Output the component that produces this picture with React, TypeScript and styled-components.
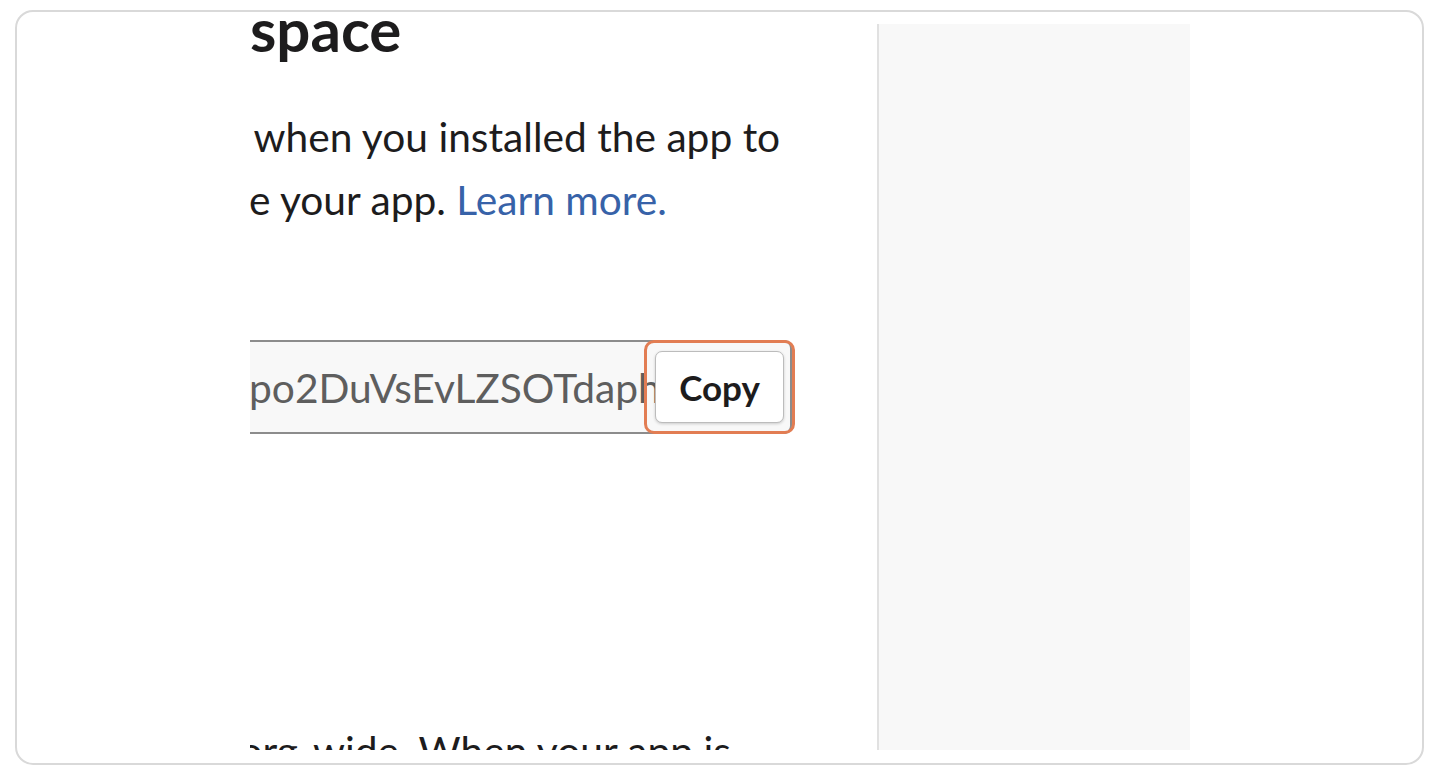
import React from 'react';
import styled, { createGlobalStyle } from 'styled-components';

const GlobalStyle = createGlobalStyle`
  html, body {
    margin: 0;
    padding: 0;
    background: #ffffff;
  }
  body {
    font-family: Lato, "Noto Sans", "DejaVu Sans", sans-serif;
    color: #1d1c1d;
  }
`;

const Frame = styled.div`
  width: 1438px;
  height: 774px;
  box-sizing: border-box;
  padding: 10px 14px 9px 15px;
  background: #ffffff;
`;

const Card = styled.div`
  height: 100%;
  box-sizing: border-box;
  border: 2px solid #d9d9d9;
  border-radius: 18px;
  overflow: hidden;
  padding-bottom: 13px;
  display: flex;
  flex-direction: column;
`;

const Viewport = styled.div`
  flex: 1;
  min-height: 0;
  display: flex;
  overflow: hidden;
`;

const Gutter = styled.div`
  width: 233px;
  flex: 0 0 233px;
`;

const Main = styled.div`
  width: 627px;
  flex: 0 0 627px;
  overflow: hidden;
`;

const SidePanel = styled.aside`
  width: 313px;
  flex: 0 0 313px;
  box-sizing: border-box;
  margin-top: 12px;
  background: #f8f8f8;
  border-left: 2px solid #e1e1e1;
`;

const Heading = styled.h1`
  margin: -13px 0 0;
  font-size: 60px;
  line-height: 60px;
  font-weight: 700;
  white-space: nowrap;
`;

const Paragraph = styled.div<{ $gap: number }>`
  margin-top: ${(p) => p.$gap}px;
  font-size: 40.7px;
  line-height: 63px;
`;

const Line = styled.div<{ $indent?: number }>`
  white-space: nowrap;
  text-indent: ${(p) => p.$indent ?? 0}px;
`;

/* zero-width box whose text spills out to the left and gets clipped */
const Clipped = styled.span`
  display: inline-flex;
  width: 0;
  justify-content: flex-end;
  white-space: nowrap;
  text-indent: 0;
`;

const Link = styled.a`
  color: #3762a8;
  text-decoration: none;
`;

const Field = styled.div`
  margin-top: 109px;
  width: 542px;
  height: 94px;
  box-sizing: border-box;
  display: flex;
  align-items: center;
  background: #f8f8f8;
  border-top: 2px solid #8c8c8c;
  border-bottom: 2px solid #8c8c8c;
  border-right: 2px solid #8c8c8c;
  border-radius: 0 8px 8px 0;
  padding-right: 6px;
`;

const TokenText = styled.div`
  flex: 1;
  min-width: 0;
  overflow: hidden;
  white-space: nowrap;
  font-size: 40.7px;
  color: #5e5e5e;
  text-indent: -1px;
`;

const ButtonSlot = styled.div`
  position: relative;
  flex: 0 0 auto;
`;

const CopyButton = styled.button`
  width: 129px;
  height: 72px;
  box-sizing: border-box;
  background: #ffffff;
  border: 1px solid #bcbcbc;
  border-radius: 7px;
  box-shadow: 0 1px 3px rgba(0, 0, 0, 0.18);
  font-family: Lato, "Noto Sans", sans-serif;
  font-size: 35px;
  font-weight: 700;
  color: #1d1c1d;
  padding: 0;
  cursor: pointer;
`;

const Highlight = styled.div`
  position: absolute;
  inset: -11px;
  border: 3px solid #e27d53;
  border-radius: 10px;
  pointer-events: none;
`;

const App = () => {
  return (
    <Frame>
      <GlobalStyle />
      <Card>
        <Viewport>
          <Gutter />
          <Main>
            <Heading>
              <Clipped>OAuth Tokens for Your Work</Clipped>space
            </Heading>
            <Paragraph $gap={46}>
              <Line $indent={-6}>
                <Clipped>These OAuth tokens were automatically generated</Clipped> when you installed the app to
              </Line>
              <Line $indent={-1}>
                <Clipped>your team. You can use these to authenticat</Clipped>e your app.{' '}
                <Link href="#">Learn more.</Link>
              </Line>
            </Paragraph>
            <Field>
              <TokenText>
                <Clipped>xoxb-4096311802-5370298104751-</Clipped>po2DuVsEvLZSOTdaphQk
              </TokenText>
              <ButtonSlot>
                <CopyButton>Copy</CopyButton>
                <Highlight />
              </ButtonSlot>
            </Field>
            <Paragraph $gap={285}>
              <Line $indent={-21}>
                <Clipped>You can also install your app</Clipped> org-wide. When your app is
              </Line>
            </Paragraph>
          </Main>
          <SidePanel />
        </Viewport>
      </Card>
    </Frame>
  );
};

export default App;
